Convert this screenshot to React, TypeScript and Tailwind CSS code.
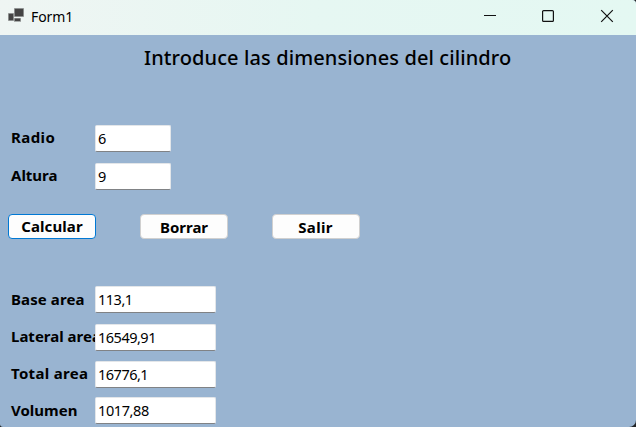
type FieldProps = { label: string; value: string; labelClass: string; valueClass: string; widthClass: string };

function Field({ label, value, labelClass, valueClass, widthClass }: FieldProps) {
  return (
    <div className="flex h-[27px] items-center">
      <div className={`w-[84px] shrink-0 whitespace-nowrap text-[15px] leading-[20px] font-bold ${labelClass}`}>{label}</div>
      <div className={`z-10 h-[27px] rounded-[2px] border border-[#e3e6e9] border-b-[#808285] bg-white pl-[2px] text-[14.5px] leading-[25px] ${widthClass} ${valueClass}`}>
        {value}
      </div>
    </div>
  );
}

function Button({ label, className }: { label: string; className: string }) {
  return (
    <button className={`flex h-[25px] w-[88px] items-center justify-center rounded-[4px] border bg-[#fdfdfd] text-[15px] leading-[20px] font-bold ${className}`}>
      {label}
    </button>
  );
}

export default function App() {
  return (
    <div className="h-[427px] w-[636px] overflow-hidden bg-[#222426] font-['Noto_Sans','Open_Sans',sans-serif] text-black">
      <div className="flex h-full flex-col overflow-hidden rounded-tr-[4px] rounded-br-[7px] rounded-bl-[3px] bg-[#99b4d1]">
        <header className="flex h-[35px] shrink-0 items-center bg-gradient-to-r from-[#eff5f3] via-[#e6f7f2] to-[#e4f8f2]">
          <svg className="mb-[3px] ml-[8px] shrink-0" width="16" height="16" viewBox="0 0 16 16">
            <path d="M6 0H16v9H6zM0 5h6v8H0zM6 10h7v4H6z" fill="#a9adac" />
            <path d="M6.7.7h8.6v7.6H6.7zM.7 5.7h4.6v6.6H.7zM6.7 10.5h5.6v2.6H6.7z" fill="#444" />
          </svg>
          <span className="mb-[2px] ml-[7px] text-[14px] tracking-[-0.1px]">Form1</span>
          <svg className="mb-[3px] ml-auto mr-[22px]" width="130" height="14" viewBox="0 0 130 14" fill="none" stroke="#111" strokeWidth="1.2">
            <path d="M0 6.5h12" strokeWidth="1" />
            <rect x="58.6" y="1.6" width="10.8" height="10.8" rx="1" />
            <path d="m117.2 1.2 11.6 11.6m0-11.6-11.6 11.6" />
          </svg>
        </header>
        <main className="flex flex-1 flex-col">
          <h1 className="mt-[9px] ml-[144px] h-[28px] whitespace-nowrap text-[20px] leading-[28px] font-medium tracking-[0.1px]">Introduce las dimensiones del cilindro</h1>
          <section className="mt-[18px] ml-[11px] flex flex-col gap-[11px] pt-[35px]">
            <Field label="Radio" value="6" labelClass="pb-[3px] tracking-[0.4px]" valueClass="" widthClass="w-[76px]" />
            <Field label="Altura" value="9" labelClass="pb-[3px]" valueClass="" widthClass="w-[76px]" />
          </section>
          <div className="mt-[24px] ml-[8px] flex gap-[44px]">
            <Button label="Calcular" className="border-[#0078d4] pb-[2px] tracking-[0.1px]" />
            <Button label="Borrar" className="border-[#d0d0d0]" />
            <Button label="Salir" className="border-[#d0d0d0] pr-[1px] tracking-[0.3px]" />
          </div>
          <section className="mt-[47px] ml-[11px] flex flex-col">
            <Field label="Base area" value="113,1" labelClass="pb-[1px] tracking-[0.1px]" valueClass="tracking-[-0.5px]" widthClass="w-[121px]" />
            <div className="h-[11px]" />
            <Field label="Lateral area" value="16549,91" labelClass="pb-[3px]" valueClass="tracking-[-0.5px]" widthClass="w-[121px]" />
            <div className="h-[10px]" />
            <Field label="Total area" value="16776,1" labelClass="pb-[3px] tracking-[0.3px]" valueClass="tracking-[-0.5px]" widthClass="w-[121px]" />
            <div className="h-[9px]" />
            <Field label="Volumen" value="1017,88" labelClass="pb-[1px]" valueClass="tracking-[-0.4px]" widthClass="w-[121px]" />
          </section>
        </main>
      </div>
    </div>
  );
}
